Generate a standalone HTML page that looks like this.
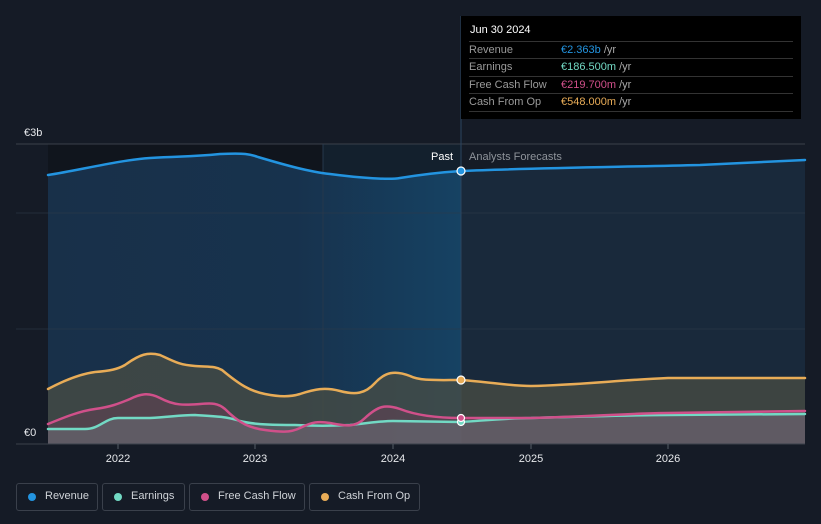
<!DOCTYPE html>
<html><head><meta charset="utf-8"><style>
html,body{margin:0;padding:0;background:#151b26;width:821px;height:524px;overflow:hidden;font-family:"Liberation Sans",sans-serif;}
.tt{position:absolute;left:461px;top:16px;width:340px;height:103px;background:#000;}
.tt .h{position:absolute;left:9px;top:8px;color:#fff;font-size:11px;}
.tt .r{position:absolute;left:8px;width:324px;height:17px;border-top:1px solid #333;font-size:11px;color:#9a9a9a;line-height:16px;}
.tt .r span{position:absolute;left:92px;}
.tt .r i{font-style:normal;color:#aaa;}
.leg{position:absolute;top:483px;height:28px;border:1px solid #3a404b;border-radius:3px;font-size:11px;color:#cfd3d8;line-height:25px;box-sizing:border-box;}
.leg b{position:absolute;left:11px;top:9px;width:8px;height:8px;border-radius:50%;}
.leg span{position:absolute;left:28px;}
</style></head><body>
<svg width="821" height="524" style="position:absolute;left:0;top:0">
<defs>
<linearGradient id="pg" x1="0" y1="0" x2="1" y2="0"><stop offset="0" stop-color="#183049"/><stop offset="0.6" stop-color="#17324d"/><stop offset="1" stop-color="#164263"/></linearGradient>
</defs>
<rect x="48" y="144" width="275" height="300" fill="#10151d"/>
<rect x="323" y="144" width="138" height="300" fill="#13202d"/>
<path d="M48,175 C80,170 120,160 150,158 C180,156 190,157 220,154 C245,153 250,154 258,157 C285,165 310,172 330,174 C360,178 390,180 400,178 C425,174 445,172 461,171 L461,444 L48,444 Z" fill="url(#pg)"/>
<path d="M461,171 C530,168 620,167 700,165 C740,163 780,161 805,160 L805,444 L461,444 Z" fill="#19293b"/>
<line x1="16" y1="144" x2="805" y2="144" stroke="#3a404b"/>
<line x1="16" y1="213" x2="805" y2="213" stroke="#2d3a4a" stroke-opacity="0.6"/>
<line x1="16" y1="329" x2="805" y2="329" stroke="#2d3a4a" stroke-opacity="0.6"/>
<line x1="461" y1="16" x2="461" y2="444" stroke="#2b4560"/>
<line x1="323" y1="144" x2="323" y2="444" stroke="#26384c"/>
<path d="M48,389 C65,380 80,374 95,372 C110,371 118,369 125,365 C140,354 148,352 160,355 C175,362 180,365 195,366 C210,367 215,366 222,370 C240,385 250,391 265,394 C280,397 290,397 300,394 C315,389 325,387 340,391 C355,395 365,394 375,383 C385,372 395,370 410,376 C420,381 435,380 461,380 C490,382 510,386 531,386 C580,385 620,380 668,378 L805,378 L805,444 L48,444 Z" fill="#4a4d44" fill-opacity="0.75"/>
<path d="M48,424 C65,417 80,411 95,409 C110,407 118,404 130,399 C140,394 148,392 160,398 C175,406 185,405 200,404 C212,403 218,403 225,409 C240,424 250,428 265,430 C280,432 290,433 300,428 C312,422 318,421 330,423 C345,426 355,428 365,418 C378,406 385,404 400,409 C418,416 440,418 461,418 L531,418 C600,416 640,413 668,413 L805,411 L805,444 L48,444 Z" fill="#7a3f5c" fill-opacity="0.35"/>
<path d="M48,429 L85,429 C100,429 105,418 118,418 L150,418 C170,417 180,415 195,415 C210,416 225,416 240,421 C255,425 280,425 295,425 C315,426 330,426 350,425 C370,423 380,421 393,421 L461,422 C490,420 510,418 531,418 C600,416 640,415 668,415 L805,414 L805,444 L48,444 Z" fill="#6a6f78" fill-opacity="0.55"/>
<line x1="16" y1="444" x2="805" y2="444" stroke="#3a404b"/>
<g fill="none" stroke-width="2.5" stroke-linecap="round">
<path d="M48,175 C80,170 120,160 150,158 C180,156 190,157 220,154 C245,153 250,154 258,157 C285,165 310,172 330,174 C360,178 390,180 400,178 C425,174 445,172 461,171 C530,168 620,167 700,165 C740,163 780,161 805,160" stroke="#2394e0"/>
<path d="M48,389 C65,380 80,374 95,372 C110,371 118,369 125,365 C140,354 148,352 160,355 C175,362 180,365 195,366 C210,367 215,366 222,370 C240,385 250,391 265,394 C280,397 290,397 300,394 C315,389 325,387 340,391 C355,395 365,394 375,383 C385,372 395,370 410,376 C420,381 435,380 461,380 C490,382 510,386 531,386 C580,385 620,380 668,378 L805,378" stroke="#e8ac57"/>
<path d="M48,429 L85,429 C100,429 105,418 118,418 L150,418 C170,417 180,415 195,415 C210,416 225,416 240,421 C255,425 280,425 295,425 C315,426 330,426 350,425 C370,423 380,421 393,421 L461,422 C490,420 510,418 531,418 C600,416 640,415 668,415 L805,414" stroke="#72d9c4"/>
<path d="M48,424 C65,417 80,411 95,409 C110,407 118,404 130,399 C140,394 148,392 160,398 C175,406 185,405 200,404 C212,403 218,403 225,409 C240,424 250,428 265,430 C280,432 290,433 300,428 C312,422 318,421 330,423 C345,426 355,428 365,418 C378,406 385,404 400,409 C418,416 440,418 461,418 L531,418 C600,416 640,413 668,413 L805,411" stroke="#d0508a"/>
</g>
<g stroke="#fff" stroke-width="1.2">
<circle cx="461" cy="422" r="3.5" fill="#72d9c4"/>
<circle cx="461" cy="418" r="3.5" fill="#d0508a"/>
<circle cx="461" cy="380" r="4" fill="#e8ac57"/>
<circle cx="461" cy="171" r="4" fill="#2394e0"/>
</g>
<g stroke="#555c66"><line x1="118" y1="444" x2="118" y2="449"/><line x1="255" y1="444" x2="255" y2="449"/><line x1="393" y1="444" x2="393" y2="449"/><line x1="531" y1="444" x2="531" y2="449"/><line x1="668" y1="444" x2="668" y2="449"/></g>
<g font-family="Liberation Sans, sans-serif" font-size="11" fill="#e6e8eb" text-anchor="middle">
<text x="118" y="462">2022</text><text x="255" y="462">2023</text><text x="393" y="462">2024</text><text x="531" y="462">2025</text><text x="668" y="462">2026</text>
</g>
<text x="24" y="136" font-size="11" fill="#e6e8eb" font-family="Liberation Sans, sans-serif">€3b</text>
<text x="24" y="436" font-size="11" fill="#e6e8eb" font-family="Liberation Sans, sans-serif">€0</text>
<text x="453" y="160" font-size="11" fill="#ffffff" text-anchor="end" font-family="Liberation Sans, sans-serif">Past</text>
<text x="469" y="160" font-size="11" fill="#8e939a" font-family="Liberation Sans, sans-serif">Analysts Forecasts</text>
</svg>
<div class="tt">
<div class="h">Jun 30 2024</div>
<div class="r" style="top:25px">Revenue<span><font color="#2394e0">€2.363b</font> <i>/yr</i></span></div>
<div class="r" style="top:42px">Earnings<span><font color="#72d9c4">€186.500m</font> <i>/yr</i></span></div>
<div class="r" style="top:60px">Free Cash Flow<span><font color="#d0508a">€219.700m</font> <i>/yr</i></span></div>
<div class="r" style="top:77px">Cash From Op<span><font color="#e8ac57">€548.000m</font> <i>/yr</i></span></div>
<div style="position:absolute;left:8px;top:95px;width:324px;border-top:1px solid #333"></div>
</div>
<div class="leg" style="left:16px;width:82px"><b style="background:#2394e0"></b><span>Revenue</span></div>
<div class="leg" style="left:102px;width:83px"><b style="background:#72d9c4"></b><span>Earnings</span></div>
<div class="leg" style="left:189px;width:116px"><b style="background:#d0508a"></b><span>Free Cash Flow</span></div>
<div class="leg" style="left:309px;width:111px"><b style="background:#e8ac57"></b><span>Cash From Op</span></div>
</body></html>
